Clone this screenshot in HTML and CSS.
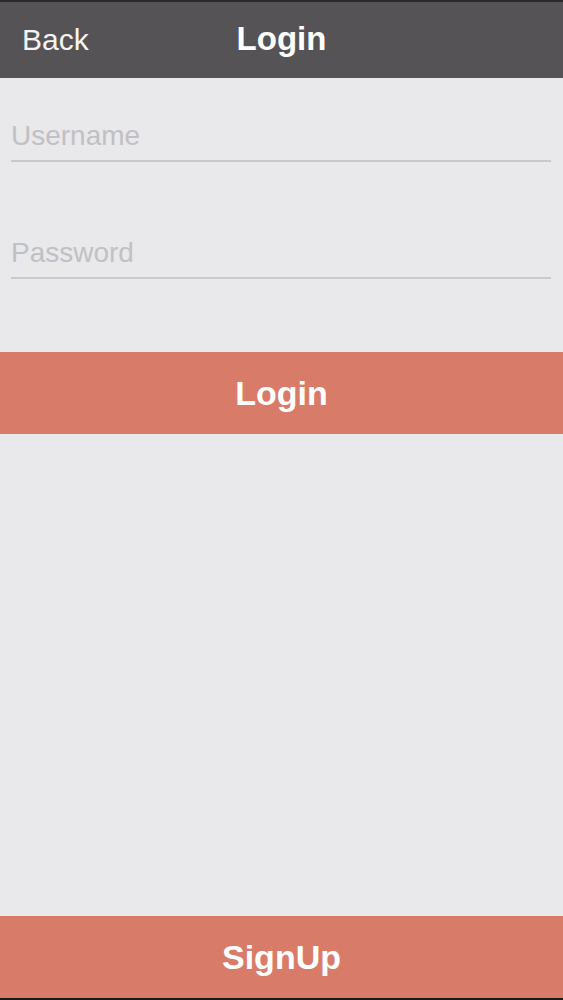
FILE: index.html
```html
<!DOCTYPE html>
<html lang="en">
<head>
    <meta charset="UTF-8">
    <meta name="viewport" content="width=device-width, initial-scale=1.0">
    <title>Login</title>
    <link rel="stylesheet" href="styles.css">
</head>
<body>

<div class="screen">
    <header class="nav-bar">
        <a href="#" class="nav-back">Back</a>
        <h1 class="nav-title">Login</h1>
    </header>

    <div class="login-form">
        <input type="text" class="field" placeholder="Username">
        <input type="password" class="field" placeholder="Password">
    </div>

    <button class="action-button login-button">Login</button>

    <div class="spacer"></div>

    <button class="action-button signup-button">SignUp</button>
</div>

</body>
</html>
```

FILE: styles.css
```css
html, body {
    margin: 0;
    padding: 0;
    height: 100%;
}
body {
    font-family: "Liberation Sans", Arial, sans-serif;
    background-color: #1c1c1c;
}
.screen {
    display: flex;
    flex-direction: column;
    height: 100%;
    box-sizing: border-box;
    border-top: 2px solid #2a2a2b;
    border-bottom: 2px solid #1a1a1a;
    background-color: #e9e8eb;
}
.nav-bar {
    position: relative;
    display: flex;
    align-items: center;
    justify-content: center;
    height: 76px;
    background-color: #555356;
    color: white;
    flex-shrink: 0;
}
.nav-back {
    position: absolute;
    left: 22px;
    top: 50%;
    transform: translateY(-50%);
    color: #f4f4f4;
    text-decoration: none;
    font-size: 30px;
}
.nav-title {
    margin: 0;
    font-size: 33px;
    font-weight: bold;
    padding-bottom: 2px;
}
.login-form {
    display: flex;
    flex-direction: column;
    gap: 75px;
    padding: 42px 12px 0 11px;
}
.field {
    border: none;
    border-bottom: 2px solid #c9c8cc;
    background: transparent;
    font-family: "Liberation Sans", Arial, sans-serif;
    font-size: 28px;
    padding: 0 0 8px 0;
    outline: none;
    color: #333;
}
.field::placeholder {
    color: #c1c0c4;
}
.action-button {
    display: block;
    width: 100%;
    height: 82px;
    border: none;
    background-color: #d87c69;
    color: white;
    font-family: "Liberation Sans", Arial, sans-serif;
    font-size: 34px;
    font-weight: bold;
    cursor: pointer;
    flex-shrink: 0;
}
.login-button {
    margin-top: 73px;
}
.spacer {
    flex: 1;
}
```
